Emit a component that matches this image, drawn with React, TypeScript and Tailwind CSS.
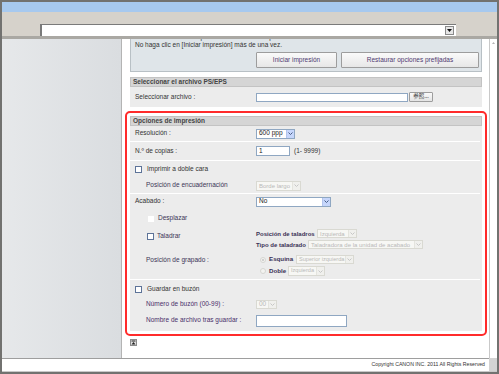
import React from "react";
import clsx from "clsx";

// small XP-style form controls used by the print settings page

function Select({ value, className, disabled }: { value: string; className?: string; disabled?: boolean }) {
  return (
    <div
      className={clsx(
        "flex items-stretch border whitespace-nowrap",
        disabled ? "border-[#d9d9d2] bg-[#f7f7f4] text-[#b9b9b9]" : "border-[#8fa7c2] bg-white text-[#222]",
        className
      )}
    >
      <span className="flex flex-1 items-center overflow-hidden pl-[2px]">{value}</span>
      <span
        className={clsx(
          "flex w-[8px] shrink-0 items-center justify-center border-l",
          disabled ? "border-[#e4e4de] bg-[#f0f0ed]" : "border-[#b3c5ee] bg-[#c6d6fb]"
        )}
      >
        <svg width="5" height="3" viewBox="0 0 5 3">
          <path d="M0.5 0.5 L2.5 2.5 L4.5 0.5" fill="none" stroke={disabled ? "#c6c6c6" : "#4a5f86"} strokeWidth="1" />
        </svg>
      </span>
    </div>
  );
}

function Input({ className, value }: { className?: string; value?: string }) {
  return (
    <div className={clsx("flex items-center border border-[#8fa7c2] bg-white pl-[2px] text-[#222]", className)}>
      {value}
    </div>
  );
}

function Check({ plain }: { plain?: boolean }) {
  return plain ? (
    <span className="h-[6px] w-[6px] shrink-0 bg-white" />
  ) : (
    <span className="h-[7px] w-[7px] shrink-0 border border-[#5d7398] bg-white" />
  );
}

function Radio({ checked }: { checked?: boolean }) {
  return (
    <span className="flex h-[6px] w-[6px] shrink-0 items-center justify-center rounded-full border border-[#d6d6d2] bg-[#f3f3f1]">
      {checked && <span className="h-[2px] w-[2px] rounded-full bg-[#c4c4c4]" />}
    </span>
  );
}

function Sep() {
  return <div className="mr-[2px] h-[1px] bg-white" />;
}

function SectionHeader({ title }: { title: string }) {
  return (
    <div className="flex h-[10px] items-center border border-[#c3c3c3] bg-[#d5d5d5] pl-[2px] font-bold text-[#444]">
      {title}
    </div>
  );
}

export default function App() {
  return (
    <div className="flex h-[374px] w-[499px] flex-col overflow-hidden bg-[#727270] px-[2px] pt-[2px] pb-[2px] font-['Liberation_Sans',Arial,sans-serif] text-[6.5px] leading-none text-[#333]">
      {/* window chrome */}
      <div className="h-[10px] shrink-0 bg-[#a7c9ef]" />
      <div className="h-[12px] shrink-0 bg-[#d6d2cb]" />
      <div className="flex h-[12px] shrink-0 bg-[#d6d2cb]">
        <div className="w-[38px]" />
        <div className="flex w-[416px] items-center border-t border-l-2 border-[#7a7a7a] bg-white pr-[2px]">
          <div className="flex-1" />
          <div className="flex h-[9px] w-[9px] items-center justify-center border border-[#8a8a8a] bg-[#e6e6e6]">
            <svg width="5" height="3" viewBox="0 0 5 3">
              <path d="M0 0 H5 L2.5 3 Z" fill="#111" />
            </svg>
          </div>
        </div>
      </div>
      <div className="h-[3px] shrink-0 bg-[#aaa8a3]" />

      {/* body */}
      <div className="flex h-[319px] shrink-0">
        <div className="w-[120px] border-r border-[#b4b4b4] bg-linear-to-r from-[#e6e8ea] to-[#dadde0]" />

        <div className="flex-1 overflow-hidden bg-white pr-[2px] pl-[3px]">
          {/* top panel, partly scrolled out */}
          <div className="mx-[5px] -mt-[6px] border-x border-b border-[#b8c0c5] bg-[#dfe5e9] pr-[2px] pb-[3px] pl-[4px]">
            <div className="flex h-[8px] items-center">・El envío del archivo puede tardar cierto tiempo.</div>
            <div className="flex h-[8px] items-center">No haga clic en [Iniciar impresión] más de una vez.</div>
            <div className="mt-[3px] flex h-[16px] justify-end gap-[4px] text-[#4f3a70]">
              <button className="w-[81px] rounded-[1px] border border-[#9d9d9d] bg-linear-to-b from-[#fafafa] to-[#e7e7e7]">
                Iniciar impresión
              </button>
              <button className="w-[138px] rounded-[1px] border border-[#9d9d9d] bg-linear-to-b from-[#fafafa] to-[#e7e7e7]">
                Restaurar opciones prefijadas
              </button>
            </div>
          </div>

          {/* PS/EPS file */}
          <div className="mx-[5px] mt-[5px]">
            <SectionHeader title="Seleccionar el archivo PS/EPS" />
            <div className="flex h-[20px] items-center bg-[#ececec] pl-[5px]">
              <div className="w-[121px]">Seleccionar archivo :</div>
              <Input className="h-[9px] w-[152px]" />
              <button className="ml-[1px] h-[10px] w-[24px] rounded-[1px] border border-[#9d9d9d] bg-linear-to-b from-[#fafafa] to-[#e4e4e4] font-['Noto_Sans_CJK_JP',sans-serif] text-[5.5px] text-[#333]">
                参照...
              </button>
            </div>
          </div>

          {/* print options (highlighted) */}
          <div className="mt-[4px] rounded-[5px] border-2 border-[#ff2b2b] p-[3px]">
            <div className="bg-[#ececec]">
              <SectionHeader title="Opciones de impresión" />

              <div className="flex h-[15px] items-center pl-[5px]">
                <div className="w-[121px]">Resolución :</div>
                <Select value="600 ppp" className="h-[10px] w-[39px]" />
              </div>
              <Sep />
              <div className="flex h-[18px] items-center pl-[5px]">
                <div className="w-[121px]">N.º de copias :</div>
                <Input value="1" className="h-[10px] w-[34px]" />
                <span className="ml-[4px]">(1- 9999)</span>
              </div>
              <Sep />

              <div className="flex h-[17px] items-center gap-[5px] pl-[5px]">
                <Check />
                <span>Imprimir a doble cara</span>
              </div>
              <div className="flex h-[15px] items-center pl-[16px] text-[#3b3557]">
                <div className="w-[110px]">Posición de encuadernación</div>
                <Select value="Borde largo" disabled className="h-[10px] w-[45px] text-[6px]" />
              </div>
              <Sep />

              <div className="flex h-[15px] items-center pl-[5px]">
                <div className="w-[121px]">Acabado :</div>
                <Select value="No" className="h-[10px] w-[75px]" />
              </div>
              <div className="flex h-[19px] items-center gap-[4px] pl-[18px] text-[#3b3557]">
                <Check plain />
                <span>Desplazar</span>
              </div>
              <div className="flex h-[22px]">
                <div className="flex h-[16px] w-[126px] items-center gap-[3px] pl-[17px] text-[#3b3557]">
                  <Check />
                  <span>Taladrar</span>
                </div>
                <div className="flex flex-col text-[6px] font-bold text-[#3a3156]">
                  <div className="flex h-[11px] items-center">
                    <span className="w-[61px] whitespace-nowrap">Posición de taladros</span>
                    <Select value="Izquierda" disabled className="h-[9px] w-[40px] font-normal" />
                  </div>
                  <div className="flex h-[11px] items-center">
                    <span className="w-[52px] whitespace-nowrap">Tipo de taladrado</span>
                    <Select value="Taladradora de la unidad de acabado" disabled className="h-[9px] w-[115px] font-normal" />
                  </div>
                </div>
              </div>
              <div className="flex h-[29px] pt-[4px] pb-[2px]">
                <div className="flex h-[12px] w-[126px] items-center pl-[16px] text-[#3b3557]">Posición de grapado :</div>
                <div className="flex flex-col font-bold text-[#3a3156]">
                  <div className="flex h-[12px] items-center pl-[4px]">
                    <Radio checked />
                    <span className="ml-[3px] w-[27px] text-[6.2px]">Esquina</span>
                    <Select value="Superior izquierda" disabled className="h-[9px] w-[58px] text-[5.6px] font-normal" />
                  </div>
                  <div className="flex h-[13px] items-center pl-[4px]">
                    <Radio />
                    <span className="ml-[3px] w-[19px] text-[6.2px]">Doble</span>
                    <Select value="Izquierda" disabled className="h-[10px] w-[37px] text-[5.6px] font-normal" />
                  </div>
                </div>
              </div>
              <Sep />

              <div className="flex h-[18px] items-center gap-[5px] pl-[5px]">
                <Check />
                <span>Guardar en buzón</span>
              </div>
              <div className="flex h-[12px] items-center pl-[16px] text-[#4a2f6b]">
                <div className="w-[110px]">Número de buzón (00-99) :</div>
                <Select value="00" disabled className="h-[9px] w-[21px]" />
              </div>
              <div className="flex h-[21px] items-center pl-[16px] text-[#4a2f6b]">
                <div className="w-[110px]">Nombre de archivo tras guardar :</div>
                <Input className="h-[12px] w-[91px]" />
              </div>
            </div>
          </div>

          {/* back to top */}
          <div className="mt-[3px] ml-[5px]">
            <svg width="7" height="7" viewBox="0 0 7 7">
              <rect x="0.5" y="0.5" width="6" height="6" fill="#dedede" stroke="#8c8c8c" />
              <rect x="1.5" y="1.5" width="4" height="1" fill="#222" />
              <path d="M1.5 5.5 L3.5 3 L5.5 5.5 Z" fill="#222" />
            </svg>
          </div>
        </div>

        {/* scrollbar */}
        <div className="relative w-[8px] border-l border-[#c9c9c9] bg-white">
          <svg className="absolute top-[3px] left-[2px]" width="3" height="2" viewBox="0 0 3 2">
            <path d="M0 2 L1.5 0 L3 2 Z" fill="#b5b5b5" />
          </svg>
        </div>
      </div>

      {/* footer */}
      <div className="flex h-[13px] shrink-0">
        <div className="flex flex-1 items-center justify-end border-t border-[#9e9e9e] bg-white pr-[4px] text-[5.2px] text-[#333]">
          Copyright CANON INC. 2011 All Rights Reserved
        </div>
        <div className="w-[8px] bg-[#d3d3d3]" />
      </div>
      <div className="h-[1px] shrink-0 bg-[#c9c9c9]" />
    </div>
  );
}
